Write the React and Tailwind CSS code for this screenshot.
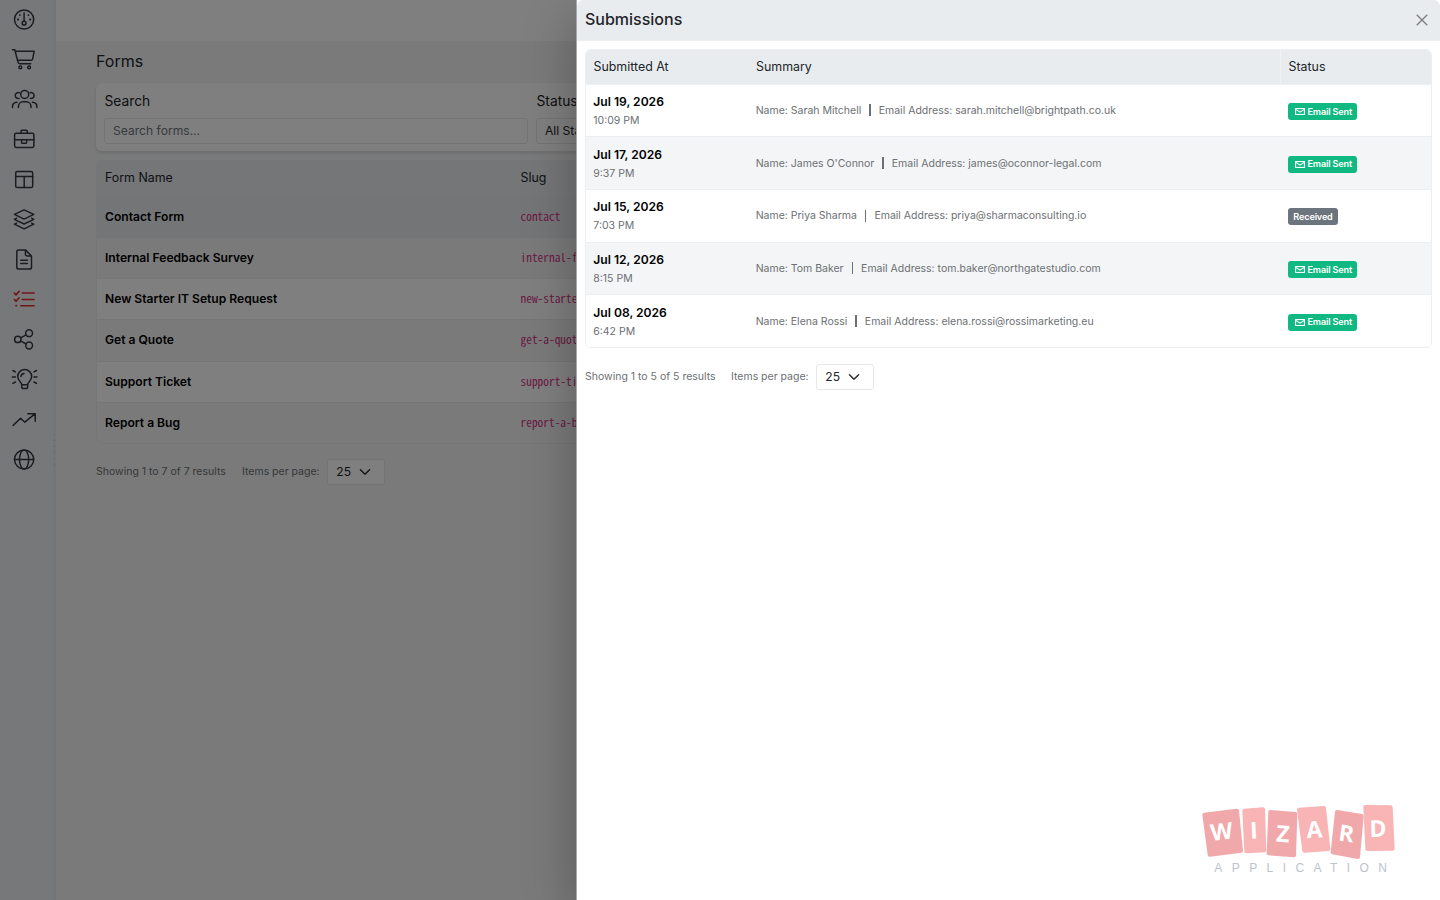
import { BsChevronDown, BsXLg } from "react-icons/bs";

const forms = [
  { name: "Contact Form", slug: "contact", bg: "bg-[#e9ebed]" },
  { name: "Internal Feedback Survey", slug: "internal-feedback", bg: "bg-[#f4f5f7]" },
  { name: "New Starter IT Setup Request", slug: "new-starter-it", bg: "bg-white" },
  { name: "Get a Quote", slug: "get-a-quote", bg: "bg-[#f4f5f7]" },
  { name: "Support Ticket", slug: "support-ticket", bg: "bg-white" },
  { name: "Report a Bug", slug: "report-a-bug", bg: "bg-[#f4f5f7]" },
];

const submissions = [
  { date: "Jul 19, 2026", time: "10:09 PM", name: "Sarah Mitchell", email: "sarah.mitchell@brightpath.co.uk", sent: true },
  { date: "Jul 17, 2026", time: "9:37 PM", name: "James O'Connor", email: "james@oconnor-legal.com", sent: true },
  { date: "Jul 15, 2026", time: "7:03 PM", name: "Priya Sharma", email: "priya@sharmaconsulting.io", sent: false },
  { date: "Jul 12, 2026", time: "8:15 PM", name: "Tom Baker", email: "tom.baker@northgatestudio.com", sent: true },
  { date: "Jul 08, 2026", time: "6:42 PM", name: "Elena Rossi", email: "elena.rossi@rossimarketing.eu", sent: true },
];

// sidebar icons, all on a 28x28 grid
const navIcons = [
  { id: "dashboard", icon: <>
    <circle cx="14.1" cy="13.5" r="9.6" />
    <path d="M14.1 7v8.2" />
    <circle cx="14.1" cy="17.2" r="1.9" />
    <path d="M9.9 9.1h.1M18.4 9.1h.1M7.8 13.5h.4M20 13.5h.4" strokeWidth="1.8" />
  </> },
  { id: "shop", icon: <>
    <path d="M2.5 3.8h2.3l3.1 12.1q.4 1.8 2 1.8h10.8M5.2 5.2h19l-1.6 8q-.2 1-1.3 1H7.6" />
    <circle cx="10.3" cy="21.4" r="1.4" />
    <circle cx="19.1" cy="21.4" r="1.4" />
  </> },
  { id: "users", icon: <>
    <circle cx="14.7" cy="8.4" r="4" />
    <path d="M8.4 21.6v-.8c0-3 2-5 4.6-5h3.4c2.6 0 4.6 2 4.6 5v.8" />
    <path d="M9.3 6.7a3 3 0 1 0-.2 5.7M20.1 6.7a3 3 0 1 1 .2 5.7" />
    <path d="M2.5 21.6v-.7c0-2.7 1.7-4.5 4.5-4.6M26.9 21.6v-.7c0-2.7-1.7-4.5-4.5-4.6" />
  </> },
  { id: "work", icon: <>
    <rect x="4.6" y="7.2" width="19.3" height="14.2" rx="1.6" />
    <path d="M11 7V5.3q0-1 1-1h4.3q1 0 1 1V7M4.6 13.8h19.3M11.6 13.8v2.6q0 .9.9.9h3.2q.9 0 .9-.9v-2.6" />
  </> },
  { id: "layout", icon: <>
    <rect x="5.7" y="5.6" width="17" height="15.9" rx="1.6" />
    <path d="M5.7 10.5h17M14.2 10.5v11" />
  </> },
  { id: "layers", icon: <>
    <path d="M14.1 3.9l9.7 4.5-9.7 4.7-9.7-4.7z" />
    <path d="M6.6 12.2l-2.2 1.1 9.7 4.7 9.7-4.7-2.2-1.1M6.6 17.1l-2.2 1.1 9.7 4.7 9.7-4.7-2.2-1.1" />
  </> },
  { id: "pages", icon: <>
    <path d="M15.4 3.9H8.6q-1.8 0-1.8 1.8v15.6q0 1.8 1.8 1.8h11.1q1.8 0 1.8-1.8V10zM15.4 3.9v4.4q0 1.7 1.7 1.7h4.4M10.8 14.3h6.7M10.8 17.6h6.7" />
  </> },
  { id: "forms", active: true, icon: <>
    <path d="M12.2 7h11.9M12.2 13.4h11.9M10.8 19.7h13.3" />
    <path d="M4.4 7.2l1.7 1.6 3-3.4M4.4 13.6l1.7 1.6 3-3.4M6.1 19.7h.3" strokeWidth="1.7" />
  </> },
  { id: "share", icon: <>
    <circle cx="7.8" cy="13.4" r="3.2" />
    <circle cx="19.1" cy="7.2" r="3.4" />
    <circle cx="19.1" cy="19.5" r="3.4" />
    <path d="M10.6 11.9l5.5-3.1M10.6 14.9l5.5 3.1" />
  </> },
  { id: "ideas", icon: <>
    <path d="M11.7 18.8c0-2.7-4-4.1-4-8.2a7 7 0 0 1 14 0c0 4.1-4 5.5-4 8.2zM11.7 18.8v2q0 1.8 1.8 1.8h2.4q1.8 0 1.8-1.8v-2M10.9 10.5q.3-2.9 3.2-3.1" />
    <path d="M2.4 11h3M24 11h3M2.9 4.5l2.5 1.4M26.5 4.5L24 5.9M2.9 17.4l2.5-1.4M26.5 17.4L24 16" />
  </> },
  { id: "analytics", icon: <>
    <path d="M3.2 19.4l7.4-7.2 4.2 4L24.9 7.8M17.7 7.7h7.5v7.5" />
  </> },
  { id: "web", icon: <>
    <circle cx="14.1" cy="13.5" r="9.6" />
    <ellipse cx="14.1" cy="13.5" rx="4.6" ry="9.6" />
    <path d="M4.5 13.5h19.2" />
  </> },
];

const Pagination = ({ total }) => (
  <div className="flex items-center text-[10.5px] text-[#6c7073]">
    <span className="w-[146px] whitespace-nowrap">Showing 1 to {total} of {total} results</span>
    <span className="w-[85.3px] whitespace-nowrap">Items per page:</span>
    <div className="flex h-[26px] w-[58px] items-center gap-2 rounded-[3px] border border-[#e5e8eb] bg-white pl-2 text-[12.1px] text-[#212529]">
      25
      <BsChevronDown className="size-3" stroke="currentColor" strokeWidth="1.2" />
    </div>
  </div>
);

const Sidebar = () => (
  <nav className="relative flex w-14 shrink-0 flex-col border-r-[3px] border-[#e9ebed] bg-[#eff1f3]">
    {navIcons.map(({ id, icon, active }) => (
      <a key={id} className={"flex h-10 items-center pl-[10px] " + (active ? "text-[#e0282e]" : "text-[#343a40]")}>
        <svg viewBox="0 0 28 28" className="size-7" fill="none" stroke="currentColor" strokeWidth="1.5" strokeLinecap="round" strokeLinejoin="round">
          {icon}
        </svg>
      </a>
    ))}
    {/* resize handle */}
    <div className="absolute top-[434px] -right-[2px] flex flex-col gap-[5px]">
      {[0, 1, 2, 3, 4, 5].map((i) => <i key={i} className="size-px bg-[#c9cdd1]" />)}
    </div>
  </nav>
);

const FormsPage = () => (
  <div className="h-full w-[576px] overflow-hidden">
    <div className="flex h-full w-[1440px] bg-[#f4f5f7] text-[#212529]">
      <Sidebar />
      <main className="flex min-w-0 grow flex-col">
        <header className="h-[41px] shrink-0 bg-white" />
        <div className="flex flex-col px-10">
          <h1 className="mt-2 h-[34px] text-[16px] leading-6">Forms</h1>
          <section className="grid h-[68px] grid-cols-[424px_424px_1fr] content-start gap-x-2 rounded-md bg-white px-2 pt-2 shadow-[0_2px_4px_rgba(0,0,0,0.12)]">
            <div>
              <label className="block h-[27px] pl-[.5px] text-[13.8px] leading-5">Search</label>
              <div className="h-[26px] rounded-[3px] border border-[#e5e8eb] pl-2 text-[12.1px] leading-6 text-[#6c757d]">Search forms...</div>
            </div>
            <div>
              <label className="block h-[27px] pl-[.5px] text-[13.8px] leading-5">Status</label>
              <div className="h-[26px] rounded-[3px] border border-[#e5e8eb] pl-2 text-[12.1px] leading-6">All Statuses</div>
            </div>
          </section>
          <section className="mt-[9px] overflow-hidden rounded-md border border-[#e9ecef]">
            <div className="grid h-[34.5px] grid-cols-[415.5px_153px] items-center bg-[#e9ecef] pl-2 text-[12.4px]">
              <span>Form Name</span>
              <span>Slug</span>
            </div>
            {forms.map(({ name, slug, bg }) => (
              <div key={slug} className={"grid h-[41.25px] grid-cols-[415.5px_153px] items-center border-t border-[#e9ecef] pl-2 " + bg}>
                <span className="text-[12.1px] font-semibold text-black">{name}</span>
                <code className="-mt-px font-['Noto_Sans_Mono_CJK_JP','Liberation_Mono',monospace] text-[11.4px] text-[#d63384]">{slug}</code>
              </div>
            ))}
          </section>
          <div className="mt-[14.8px]">
            <Pagination total={7} />
          </div>
        </div>
      </main>
    </div>
  </div>
);

const StatusBadge = ({ sent }) => (
  sent ?
    <span className="flex h-[17px] w-[69px] items-center gap-[2.5px] rounded-[3px] bg-[#10b981] pl-[7px] text-[9.1px] font-semibold tracking-[-0.15px] whitespace-nowrap text-white">
      <svg viewBox="0 0 10 7" className="h-[7px] w-[10px]" fill="none" stroke="currentColor" strokeWidth="1.1">
        <rect x=".55" y=".55" width="8.9" height="5.9" />
        <path d="M1 1.5l4 2.7 4-2.7" />
      </svg>
      Email Sent
    </span>
    :
    <span className="flex h-[17px] w-[50px] items-center justify-center rounded-[3px] bg-[#6c757d] text-[9.1px] font-semibold tracking-[-0.15px] text-white">
      Received
    </span>
);

// tilted letter cards of the brand mark
const cards = [
  { letter: "W", points: "73,74 171,62 183,182 89,194", x: 128, y: 149, turn: -7, fill: "#f0a8aa" },
  { letter: "I", points: "193,62 249,58 253,181 199,184", x: 223, y: 146, turn: -3, fill: "#f9b4b5" },
  { letter: "Z", points: "271,66 346,72 342,196 266,190", x: 307, y: 156, turn: 4, fill: "#f0a8aa" },
  { letter: "A", points: "357,59 432,54 445,177 373,182", x: 405, y: 143, turn: -4, fill: "#f9b4b5" },
  { letter: "R", points: "471,66 545,78 534,201 458,187", x: 496, y: 155, turn: 8, fill: "#f0a8aa" },
  { letter: "D", points: "556,51 632,52 638,176 562,177", x: 595, y: 140, turn: -2, fill: "#f9b4b5" },
];

const WizardLogo = () => (
  <svg viewBox="0 0 720 300" className="absolute right-5 bottom-[10px] h-[100px] w-[240px]">
    {cards.map(({ letter, points, x, y, turn, fill }) => (
      <g key={letter}>
        <polygon points={points} fill={fill} stroke={fill} strokeWidth="12" strokeLinejoin="round" />
        <text x={x} y={y} transform={`rotate(${turn} ${x} ${y})`} textAnchor="middle" fill="#fff" className="font-['Open_Sans',sans-serif] text-[69px] font-bold">{letter}</text>
      </g>
    ))}
    <text x="103" y="244.5" textLength="518" fill="#bcc2ce" className="font-['Liberation_Sans',sans-serif] text-[36px]">APPLICATION</text>
  </svg>
);

const SubmissionsPanel = () => (
  <aside className="absolute inset-y-0 right-0 flex w-[864px] flex-col border-l border-[#a6a9ac] bg-white text-[#212529] shadow-[0_16px_48px_rgba(0,0,0,0.28)]">
    <header className="flex h-[41px] shrink-0 items-center justify-between rounded-t-md border-b border-[#eceff1] bg-[#e9ecef] pr-[11px] pl-2">
      <h2 className="-mt-[2px] text-[16px] font-medium">Submissions</h2>
      <BsXLg className="size-[14px] text-[#6f7275]" stroke="currentColor" strokeWidth=".6" />
    </header>
    <div className="px-2 pt-2">
      <div className="overflow-hidden rounded-md border border-[#eceff1]">
        <div className="grid h-[33.5px] grid-cols-[162.5px_1fr_151px] bg-[#e9ecef] text-[12.4px] leading-[33px]">
          <span className="pl-[7.5px]">Submitted At</span>
          <span className="pl-[7.5px]">Summary</span>
          <span className="border-l border-[#eff1f3] pl-[7.5px]">Status</span>
        </div>
        {submissions.map(({ date, time, name, email, sent }) => (
          <div key={email} className="grid h-[52.7px] grid-cols-[162.5px_1fr_151px] items-center border-t border-[#eceff1] even:bg-white odd:bg-[#f4f5f7]">
            <div className="pt-[1.5px] pl-[7.3px]">
              <p className="text-[12.1px] leading-[19px] font-semibold text-black">{date}</p>
              <p className="pt-px text-[10.5px] leading-[18px] text-[#6c7073]">{time}</p>
            </div>
            <div className="flex items-center pt-px pl-[7.2px] text-[10.5px] text-[#6c7073]">
              <span>Name: {name}</span>
              <span className="mx-2 -mt-px h-3 w-[1.5px] bg-[#6c7073]" />
              <span>Email Address: {email}</span>
            </div>
            <div className="flex pt-[2px] pl-2">
              <StatusBadge sent={sent} />
            </div>
          </div>
        ))}
      </div>
      <div className="mt-4">
        <Pagination total={5} />
      </div>
    </div>
    <WizardLogo />
  </aside>
);

export default function App() {
  return (
    <div className="relative h-screen w-screen overflow-hidden font-['Inter',sans-serif]">
      <FormsPage />
      <div className="absolute inset-0 bg-black/50" />
      <SubmissionsPanel />
    </div>
  )
}
